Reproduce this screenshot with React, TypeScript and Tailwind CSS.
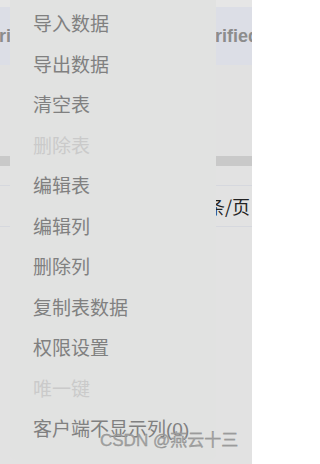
import React from "react";

const items: { label: string; disabled?: boolean }[] = [
  { label: "导入数据" },
  { label: "导出数据" },
  { label: "清空表" },
  { label: "删除表", disabled: true },
  { label: "编辑表" },
  { label: "编辑列" },
  { label: "删除列" },
  { label: "复制表数据" },
  { label: "权限设置" },
  { label: "唯一键", disabled: true },
  { label: "客户端不显示列(0)" },
];

export default function App() {
  return (
    <div
      className="relative w-[252px] h-[464px] overflow-hidden bg-[#e2e2e2]"
      style={{ fontFamily: '"Liberation Sans", "Noto Sans CJK SC", sans-serif' }}
    >
      {/* underlying page (dimmed) */}
      <div className="flex flex-col w-full">
        <div className="h-[7px] bg-[#e6e6e6]" />
        <div className="h-[58px] bg-[#dcdee6] flex items-center text-[18px] font-bold text-[#8c8c8c] whitespace-nowrap">
          <span className="ml-[-22px] w-[200px] shrink-0">Veri</span>
          <span className="ml-[16px] shrink-0">Verified</span>
        </div>
        <div className="h-[91px] bg-[#e1e1e1]" />
        <div className="h-[10px] bg-[#c9c9c9]" />
        <div className="h-[20px] bg-[#e2e2e2] border-b border-[#d6d8de]" />
        <div className="h-[41px] flex items-center justify-end pr-[2px] border-b border-[#d6d8de] whitespace-nowrap">
          <span className="text-[18px] text-[#222]" style={{ fontFamily: '"Noto Sans CJK SC", sans-serif' }}>
            10条/页
          </span>
        </div>
      </div>

      {/* overlay menu */}
      <div className="absolute left-[10px] top-0 w-[206px] h-[460px] bg-[#e1e2e1] rounded-b-[7px] pt-[5px]">
        {items.map((it) => (
          <div
            key={it.label}
            className={`h-[40.5px] flex items-center pl-[23px] text-[19px] whitespace-nowrap ${
              it.disabled ? "text-[#cacaca]" : "text-[#808080]"
            }`}
          >
            {it.label}
          </div>
        ))}
      </div>

      {/* watermark */}
      <div className="absolute left-[100px] top-[431px] text-[17px] text-[#a2a2a2] leading-[20px] whitespace-nowrap [-webkit-text-stroke:0.3px_#8a8a8a]">
        CSDN @燕云十三
      </div>
    </div>
  );
}
